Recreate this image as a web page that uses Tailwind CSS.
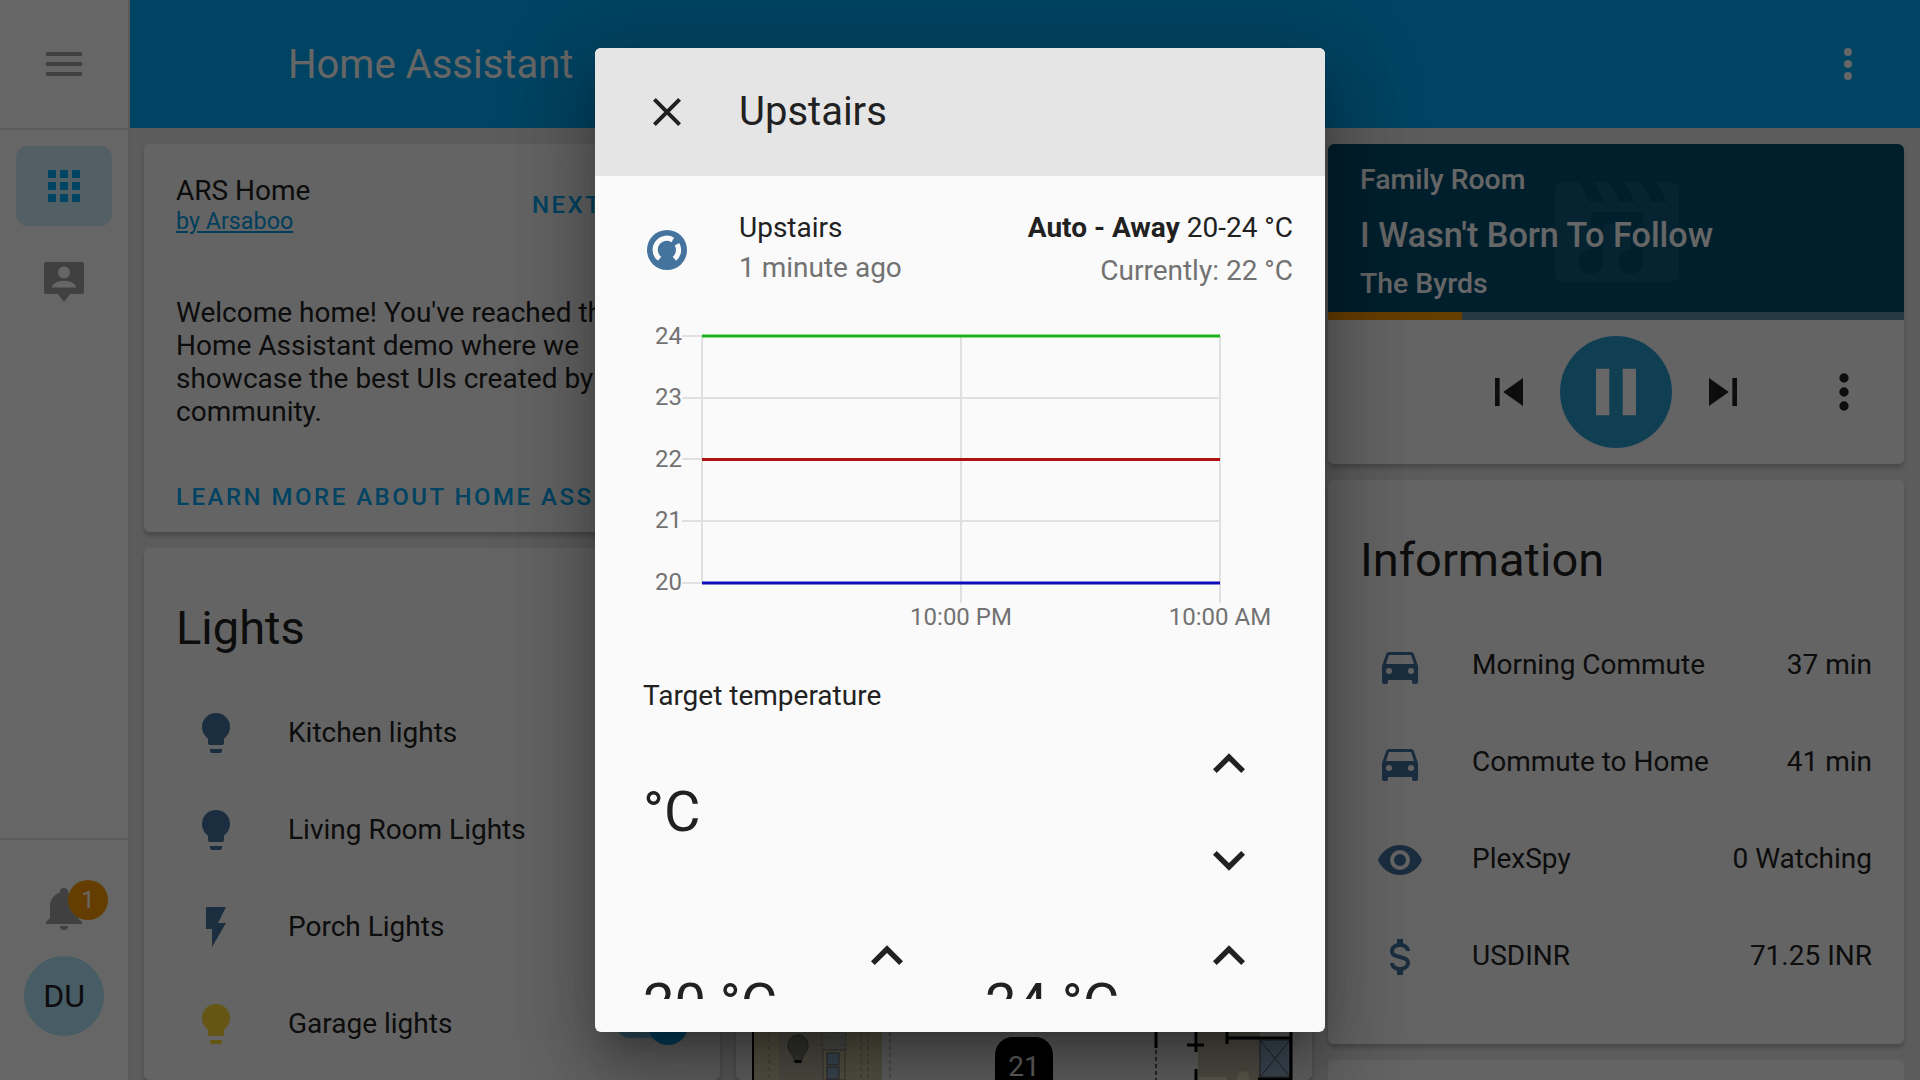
<!DOCTYPE html>
<html lang="en">
<head>
<meta charset="utf-8">
<title>Home Assistant</title>
<script src="https://cdn.jsdelivr.net/npm/@tailwindcss/browser@4"></script>
</head>
<body class="m-0">
<div class="relative flex w-[1920px] h-[1080px] overflow-hidden bg-[#e5e5e5] font-[Roboto,sans-serif] text-[28px] text-[#212121]">

  <!-- Sidebar -->
  <aside class="flex flex-col w-[130px] h-full shrink-0 bg-white border-r-2 border-[#e0e0e0]">
    <div class="flex items-center justify-center h-[130px] border-b-2 border-[#e0e0e0] shrink-0">
      <svg class="w-12 h-12 fill-[#a0a0a0]" viewBox="0 0 24 24"><path d="M3,6H21V8H3V6M3,11H21V13H3V11M3,16H21V18H3V16Z"/></svg>
    </div>
    <div class="flex flex-col items-center pt-[16px] flex-1">
      <div class="flex items-center justify-center w-[96px] h-[80px] rounded-[12px] bg-[#03a9f4]/20">
        <svg class="w-12 h-12 fill-[#03a9f4]" viewBox="0 0 24 24"><path d="M16,20H20V16H16M16,14H20V10H16M10,8H14V4H10M16,8H20V4H16M10,14H14V10H10M4,14H8V10H4M4,20H8V16H4M10,20H14V16H10M4,8H8V4H4V8Z"/></svg>
      </div>
      <svg class="w-12 h-12 mt-[30px] fill-[#a0a0a0]" viewBox="0 0 24 24"><path fill-rule="evenodd" d="M3,3H21A1,1 0 0,1 22,4V18A1,1 0 0,1 21,19H15L12,23L9,19H3A1,1 0 0,1 2,18V4A1,1 0 0,1 3,3M12,5.2A3,3 0 0,0 9,8.2A3,3 0 0,0 12,11.2A3,3 0 0,0 15,8.2A3,3 0 0,0 12,5.2M6,15.8H18C18,13.8 15,12.4 12,12.4C9,12.4 6,13.8 6,15.8Z"/></svg>
    </div>
    <div class="flex flex-col items-center h-[242px] border-t-2 border-[#e0e0e0] shrink-0">
      <div class="relative w-12 h-12 mt-[44px]">
        <svg class="w-12 h-12 fill-[#a0a0a0]" viewBox="0 0 24 24"><path d="M21,19V20H3V19L5,17V11C5,7.9 7.03,5.17 10,4.29C10,4.19 10,4.1 10,4A2,2 0 0,1 12,2A2,2 0 0,1 14,4C14,4.1 14,4.19 14,4.29C16.97,5.17 19,7.9 19,11V17L21,19M14,21A2,2 0 0,1 12,23A2,2 0 0,1 10,21"/></svg>
        <span class="absolute left-[28px] top-[-4px] flex items-center justify-center w-10 h-10 rounded-full bg-[#ff9800] text-white text-[24px]">1</span>
      </div>
      <div class="flex items-center justify-center w-20 h-20 mt-[24px] rounded-full bg-[#b3e5fc] text-[32px]">DU</div>
    </div>
  </aside>

  <!-- Main -->
  <div class="flex flex-col flex-1 min-w-0">
    <header class="flex items-center justify-between h-[128px] shrink-0 bg-[#03a9f4] text-white pl-[158px] pr-[48px]">
      <span class="text-[40px] pt-[2px]">Home Assistant</span>
      <svg class="w-12 h-12 fill-white" viewBox="0 0 24 24"><path d="M12,16A2,2 0 0,1 14,18A2,2 0 0,1 12,20A2,2 0 0,1 10,18A2,2 0 0,1 12,16M12,10A2,2 0 0,1 14,12A2,2 0 0,1 12,14A2,2 0 0,1 10,12A2,2 0 0,1 12,10M12,4A2,2 0 0,1 14,6A2,2 0 0,1 12,8A2,2 0 0,1 10,6A2,2 0 0,1 12,4Z"/></svg>
    </header>

    <div class="flex gap-4 pt-4 pl-[14px] pr-4 flex-1 min-h-0">

      <!-- Left column -->
      <div class="flex flex-col gap-4 w-[576px] shrink-0">
        <section class="h-[388px] shrink-0 rounded-[6px] bg-[#fafafa] shadow-[0_4px_4px_rgba(0,0,0,0.2)] overflow-hidden">
          <div class="flex items-start justify-between pl-8 pr-[33px] pt-[31px]">
            <div>
              <div class="leading-[32px]">ARS Home</div>
              <a class="block text-[23.3px] leading-[28px] text-[#039be5] underline">by Arsaboo</a>
            </div>
            <span class="mt-4 text-[24px] leading-[28px] font-medium tracking-[2.5px] text-[#03a9f4]">NEXT DEMO</span>
          </div>
          <p class="pl-8 pr-6 pt-[61px] leading-[33px]">Welcome home! You've reached the Home Assistant demo where we showcase the best UIs created by our community.</p>
          <div class="pl-8 pt-[55px] text-[24px] leading-[28px] font-medium tracking-[2.5px] text-[#03a9f4] whitespace-nowrap">LEARN MORE ABOUT HOME ASSISTANT</div>
        </section>

        <section class="flex-1 rounded-[6px] bg-[#fafafa] shadow-[0_4px_4px_rgba(0,0,0,0.2)] pl-8 pr-8">
          <h2 class="pt-[52px] text-[47px] leading-[56px]">Lights</h2>
          <div class="flex flex-col gap-[49px] pt-[53px]">
            <div class="flex items-center h-12">
              <svg class="w-12 h-12 ml-4 fill-[#44739e]" viewBox="0 0 24 24"><path d="M12,2A7,7 0 0,0 5,9C5,11.38 6.19,13.47 8,14.74V17A1,1 0 0,0 9,18H15A1,1 0 0,0 16,17V14.74C17.81,13.47 19,11.38 19,9A7,7 0 0,0 12,2M9,21A1,1 0 0,0 10,22H14A1,1 0 0,0 15,21V20H9V21Z"/></svg>
              <span class="ml-12">Kitchen lights</span>
            </div>
            <div class="flex items-center h-12">
              <svg class="w-12 h-12 ml-4 fill-[#44739e]" viewBox="0 0 24 24"><path d="M12,2A7,7 0 0,0 5,9C5,11.38 6.19,13.47 8,14.74V17A1,1 0 0,0 9,18H15A1,1 0 0,0 16,17V14.74C17.81,13.47 19,11.38 19,9A7,7 0 0,0 12,2M9,21A1,1 0 0,0 10,22H14A1,1 0 0,0 15,21V20H9V21Z"/></svg>
              <span class="ml-12">Living Room Lights</span>
            </div>
            <div class="flex items-center h-12">
              <svg class="w-12 h-12 ml-4 fill-[#44739e]" viewBox="0 0 24 24"><path d="M7,2V13H10V22L17,10H13L17,2H7Z"/></svg>
              <span class="ml-12">Porch Lights</span>
            </div>
            <div class="flex items-center h-12">
              <svg class="w-12 h-12 ml-4 fill-[#fdd835]" viewBox="0 0 24 24"><path d="M12,2A7,7 0 0,0 5,9C5,11.38 6.19,13.47 8,14.74V17A1,1 0 0,0 9,18H15A1,1 0 0,0 16,17V14.74C17.81,13.47 19,11.38 19,9A7,7 0 0,0 12,2M9,21A1,1 0 0,0 10,22H14A1,1 0 0,0 15,21V20H9V21Z"/></svg>
              <span class="ml-12">Garage lights</span>
              <div class="relative ml-auto w-[72px] h-7 rounded-full bg-[#03a9f4]/50">
                <span class="absolute right-0 top-[-5px] w-10 h-10 rounded-full bg-[#03a9f4]"></span>
              </div>
            </div>
          </div>
        </section>
      </div>

      <!-- Middle column -->
      <div class="flex flex-col w-[576px] shrink-0">
        <section class="flex flex-col justify-end flex-1 rounded-[6px] bg-[#fafafa] shadow-[0_4px_4px_rgba(0,0,0,0.2)]">
          <svg class="block w-[576px] h-[48px]" viewBox="736 1032 576 48">
            <rect x="752" y="1032" width="130" height="48" fill="#dcd8ac"/>
            <rect x="779" y="1032" width="44" height="48" fill="#cdc6b0"/>
            <rect x="752" y="1032" width="2" height="48" fill="#000"/>
            <path d="M769 1032V1080M861 1032V1080M890 1032V1080M868 1032V1080" stroke="#9a9a80" stroke-width="1" stroke-dasharray="4 3" fill="none"/>
            <path d="M798,1035C792,1035 788,1040 788,1046C788,1051 792,1054 794,1058V1062H802V1058C804,1054 808,1051 808,1046C808,1040 804,1035 798,1035Z" fill="#8a8a80" stroke="#555"/>
            <rect x="795" y="1060" width="6" height="3" fill="#000"/>
            <rect x="822" y="1032" width="24" height="18" fill="#c8c8c0" stroke="#888" stroke-dasharray="3 2"/>
            <rect x="823" y="1050" width="22" height="30" fill="#dcd8ac" stroke="#888"/>
            <rect x="827" y="1053" width="12" height="12" fill="#9bb9d4" stroke="#667"/>
            <rect x="827" y="1067" width="12" height="12" fill="#9bb9d4" stroke="#667"/>
            <rect x="995" y="1037" width="58" height="70" rx="18" fill="#000"/>
            <text x="1024" y="1076" text-anchor="middle" font-family="Roboto" font-size="28" fill="#fff">21</text>
            <rect x="1198" y="1032" width="62" height="48" fill="#d0c9b2"/>
            <rect x="1260" y="1040" width="30" height="37" fill="#9bb9d4" stroke="#556"/>
            <path d="M1260 1040L1290 1077M1290 1040L1260 1077" stroke="#556"/>
            <rect x="1199" y="1077" width="28" height="3" fill="#f0ecc8"/>
            <ellipse cx="1243" cy="1078" rx="6" ry="7" fill="#f0ecc8"/>
            <path d="M1156 1032V1048M1187 1045H1204M1196 1032V1052M1196 1069V1080M1227 1032V1044M1227 1038H1291M1291 1032V1080M1258 1079H1292" stroke="#000" stroke-width="3" fill="none"/>
            <path d="M1156 1050V1080" stroke="#666" stroke-width="2" stroke-dasharray="4 3" fill="none"/>
          </svg>
        </section>
      </div>

      <!-- Right column -->
      <div class="flex flex-col gap-4 w-[576px] shrink-0">
        <section class="h-[320px] shrink-0 rounded-[6px] bg-[#fafafa] shadow-[0_4px_4px_rgba(0,0,0,0.2)] overflow-hidden">
          <div class="relative h-[168px] bg-[#014e72] text-white text-[28.4px] font-medium pl-[32px] pt-[19px]">
            <svg class="absolute left-[227px] top-[38px] w-[124px] h-[100px]" viewBox="0 0 124 100">
              <rect width="124" height="100" rx="8" fill="#fff" fill-opacity="0.05"/>
              <path d="M24 0H39L50 20H35ZM54 0H69L80 20H65ZM86 0H101L112 20H97Z" fill="#014e72"/>
              <path d="M36 30H88V80A12,12 0 1 1 76,68V42H48V80A12,12 0 1 1 36,68Z" fill="#014e72"/>
            </svg>
            <div class="relative leading-[34px]">Family Room</div>
            <div class="relative text-[34.2px] leading-[38px] mt-[19px]">I Wasn't Born To Follow</div>
            <div class="relative leading-[34px] mt-[13px]">The Byrds</div>
          </div>
          <div class="h-2 bg-[#668ea7]"><div class="w-[134px] h-2 bg-[#ff9800]"></div></div>
          <div class="relative flex items-center justify-center h-[144px]">
            <svg class="w-14 h-14 fill-[#212121]" viewBox="0 0 24 24"><path d="M6,18V6H8V18H6M9.5,12L18,6V18L9.5,12Z"/></svg>
            <div class="flex items-center justify-center w-[112px] h-[112px] ml-[23px] mr-[23px] rounded-full bg-[#2a9fd2]">
              <svg class="w-20 h-20 fill-white" viewBox="0 0 24 24"><path d="M14,19H18V5H14M6,19H10V5H6V19Z"/></svg>
            </div>
            <svg class="w-14 h-14 fill-[#212121]" viewBox="0 0 24 24"><path d="M16,18H18V6H16M6,18L14.5,12L6,6V18Z"/></svg>
            <svg class="absolute right-[32px] top-[44px] w-14 h-14 fill-[#212121]" viewBox="0 0 24 24"><path d="M12,16A2,2 0 0,1 14,18A2,2 0 0,1 12,20A2,2 0 0,1 10,18A2,2 0 0,1 12,16M12,10A2,2 0 0,1 14,12A2,2 0 0,1 12,14A2,2 0 0,1 10,12A2,2 0 0,1 12,10M12,4A2,2 0 0,1 14,6A2,2 0 0,1 12,8A2,2 0 0,1 10,6A2,2 0 0,1 12,4Z"/></svg>
          </div>
        </section>

        <section class="h-[564px] shrink-0 rounded-[6px] bg-[#fafafa] shadow-[0_4px_4px_rgba(0,0,0,0.2)] pl-8 pr-8">
          <h2 class="pt-[52px] text-[47px] leading-[56px]">Information</h2>
          <div class="flex flex-col gap-[49px] pt-[54px]">
            <div class="flex items-center h-12">
              <svg class="w-12 h-12 ml-4 fill-[#44739e]" viewBox="0 0 24 24"><path d="M5,11L6.5,6.5H17.5L19,11M17.5,16A1.5,1.5 0 0,1 16,14.5A1.5,1.5 0 0,1 17.5,13A1.5,1.5 0 0,1 19,14.5A1.5,1.5 0 0,1 17.5,16M6.5,16A1.5,1.5 0 0,1 5,14.5A1.5,1.5 0 0,1 6.5,13A1.5,1.5 0 0,1 8,14.5A1.5,1.5 0 0,1 6.5,16M18.92,6C18.72,5.42 18.16,5 17.5,5H6.5C5.84,5 5.28,5.42 5.08,6L3,12V20A1,1 0 0,0 4,21H5A1,1 0 0,0 6,20V19H18V20A1,1 0 0,0 19,21H20A1,1 0 0,0 21,20V12L18.92,6Z"/></svg>
              <span class="ml-12 flex-1 mb-[2px]">Morning Commute</span><span class="mb-[2px]">37 min</span>
            </div>
            <div class="flex items-center h-12">
              <svg class="w-12 h-12 ml-4 fill-[#44739e]" viewBox="0 0 24 24"><path d="M5,11L6.5,6.5H17.5L19,11M17.5,16A1.5,1.5 0 0,1 16,14.5A1.5,1.5 0 0,1 17.5,13A1.5,1.5 0 0,1 19,14.5A1.5,1.5 0 0,1 17.5,16M6.5,16A1.5,1.5 0 0,1 5,14.5A1.5,1.5 0 0,1 6.5,13A1.5,1.5 0 0,1 8,14.5A1.5,1.5 0 0,1 6.5,16M18.92,6C18.72,5.42 18.16,5 17.5,5H6.5C5.84,5 5.28,5.42 5.08,6L3,12V20A1,1 0 0,0 4,21H5A1,1 0 0,0 6,20V19H18V20A1,1 0 0,0 19,21H20A1,1 0 0,0 21,20V12L18.92,6Z"/></svg>
              <span class="ml-12 flex-1 mb-[2px]">Commute to Home</span><span class="mb-[2px]">41 min</span>
            </div>
            <div class="flex items-center h-12">
              <svg class="w-12 h-12 ml-4 fill-[#44739e]" viewBox="0 0 24 24"><path d="M12,9A3,3 0 0,0 9,12A3,3 0 0,0 12,15A3,3 0 0,0 15,12A3,3 0 0,0 12,9M12,17A5,5 0 0,1 7,12A5,5 0 0,1 12,7A5,5 0 0,1 17,12A5,5 0 0,1 12,17M12,4.5C7,4.5 2.73,7.61 1,12C2.73,16.39 7,19.5 12,19.5C17,19.5 21.27,16.39 23,12C21.27,7.61 17,4.5 12,4.5Z"/></svg>
              <span class="ml-12 flex-1 mb-[2px]">PlexSpy</span><span class="mb-[2px]">0 Watching</span>
            </div>
            <div class="flex items-center h-12">
              <svg class="w-12 h-12 ml-4 fill-[#44739e]" viewBox="0 0 24 24"><path d="M7,15H9C9,16.08 10.37,17 12,17C13.63,17 15,16.08 15,15C15,13.9 13.96,13.5 11.76,12.97C9.64,12.44 7,11.78 7,9C7,7.21 8.47,5.69 10.5,5.18V3H13.5V5.18C15.53,5.69 17,7.21 17,9H15C15,7.92 13.63,7 12,7C10.37,7 9,7.92 9,9C9,10.1 10.04,10.5 12.24,11.03C14.36,11.56 17,12.22 17,15C17,16.79 15.53,18.31 13.5,18.82V21H10.5V18.82C8.47,18.31 7,16.79 7,15Z"/></svg>
              <span class="ml-12 flex-1 mb-[2px]">USDINR</span><span class="mb-[2px]">71.25 INR</span>
            </div>
          </div>
        </section>
        <section class="h-[100px] shrink-0 rounded-[6px] bg-[#fafafa]"></section>
      </div>
    </div>
  </div>

  <!-- Scrim -->
  <div class="absolute inset-0 bg-black/60"></div>

  <!-- Dialog -->
  <div class="absolute left-[595px] top-[48px] flex flex-col w-[730px] h-[984px] rounded-[6px] bg-[#fafafa] overflow-hidden shadow-[0_22px_30px_-14px_rgba(0,0,0,0.3),0_48px_76px_6px_rgba(0,0,0,0.2),0_18px_92px_16px_rgba(0,0,0,0.16)]">
    <div class="flex items-center h-[128px] shrink-0 bg-[#e5e5e5] pl-[48px]">
      <svg class="w-12 h-12 fill-[#212121]" viewBox="0 0 24 24"><path d="M19,6.41L17.59,5L12,10.59L6.41,5L5,6.41L10.59,12L5,17.59L6.41,19L12,13.41L17.59,19L19,17.59L13.41,12L19,6.41Z"/></svg>
      <h1 class="ml-12 text-[40px] leading-[48px]">Upstairs</h1>
    </div>

    <div class="h-[823px] shrink-0 overflow-hidden">
      <div class="flex h-[144px] pl-[48px] pr-8">
        <svg class="w-12 h-12 mt-[50px]" viewBox="0 0 24 24">
          <circle cx="12" cy="12" r="10" fill="#44739e"/>
          <path d="M8.3,16.4A5.75,5.75 0 0,1 14.9,7M17,9.1A5.75,5.75 0 0,1 15.7,16.4" fill="none" stroke="#fafafa" stroke-width="2.6"/>
        </svg>
        <div class="ml-12 pt-[36px]">
          <div class="leading-[32px]">Upstairs</div>
          <div class="leading-[40px] mt-1 text-[#727272]">1 minute ago</div>
        </div>
        <div class="ml-auto pt-[36px] text-right">
          <div class="leading-[32px]"><b class="font-bold">Auto - Away</b> 20-24 °C</div>
          <div class="leading-[40px] mt-[7px] text-[#727272]">Currently: 22 °C</div>
        </div>
      </div>

      <svg class="block w-[730px] h-[320px]" viewBox="595 320 730 320" font-family="Roboto" font-size="24" fill="#727272">
        <path d="M682 336H1220M682 398H1220M682 459H1220M682 521H1220M682 583H1220M702 336V583M961 336V603M1220 336V603" stroke="#e0e0e0" stroke-width="2" fill="none"/>
        <path d="M702 336H1220" stroke="#1db31d" stroke-width="3" fill="none"/>
        <path d="M702 459.5H1220" stroke="#b01010" stroke-width="3" fill="none"/>
        <path d="M702 583H1220" stroke="#0d0dbb" stroke-width="3" fill="none"/>
        <text x="682" y="344" text-anchor="end">24</text>
        <text x="682" y="405" text-anchor="end">23</text>
        <text x="682" y="467" text-anchor="end">22</text>
        <text x="682" y="528" text-anchor="end">21</text>
        <text x="682" y="590" text-anchor="end">20</text>
        <text x="961" y="625" text-anchor="middle">10:00 PM</text>
        <text x="1220" y="625" text-anchor="middle">10:00 AM</text>
      </svg>

      <div class="pl-[48px] pr-[64px]">
        <div class="mt-10 leading-[32px]">Target temperature</div>
        <div class="flex items-center justify-between mt-5">
          <span class="text-[56px] leading-none">°C</span>
          <div class="flex flex-col gap-8">
            <svg class="w-16 h-16 fill-[#212121]" viewBox="0 0 24 24"><path d="M7.41,15.41L12,10.83L16.59,15.41L18,14L12,8L6,14L7.41,15.41Z"/></svg>
            <svg class="w-16 h-16 fill-[#212121]" viewBox="0 0 24 24"><path d="M7.41,8.58L12,13.17L16.59,8.58L18,10L12,16L6,10L7.41,8.58Z"/></svg>
          </div>
        </div>
        <div class="flex gap-[66px] mt-8">
          <div class="flex items-center justify-between w-[276px]">
            <span class="text-[56px] leading-none">20 °C</span>
            <div class="flex flex-col gap-8">
              <svg class="w-16 h-16 fill-[#212121]" viewBox="0 0 24 24"><path d="M7.41,15.41L12,10.83L16.59,15.41L18,14L12,8L6,14L7.41,15.41Z"/></svg>
              <svg class="w-16 h-16 fill-[#212121]" viewBox="0 0 24 24"><path d="M7.41,8.58L12,13.17L16.59,8.58L18,10L12,16L6,10L7.41,8.58Z"/></svg>
            </div>
          </div>
          <div class="flex items-center justify-between w-[276px]">
            <span class="text-[56px] leading-none">24 °C</span>
            <div class="flex flex-col gap-8">
              <svg class="w-16 h-16 fill-[#212121]" viewBox="0 0 24 24"><path d="M7.41,15.41L12,10.83L16.59,15.41L18,14L12,8L6,14L7.41,15.41Z"/></svg>
              <svg class="w-16 h-16 fill-[#212121]" viewBox="0 0 24 24"><path d="M7.41,8.58L12,13.17L16.59,8.58L18,10L12,16L6,10L7.41,8.58Z"/></svg>
            </div>
          </div>
        </div>
      </div>
    </div>
  </div>
</div>
</body>
</html>
